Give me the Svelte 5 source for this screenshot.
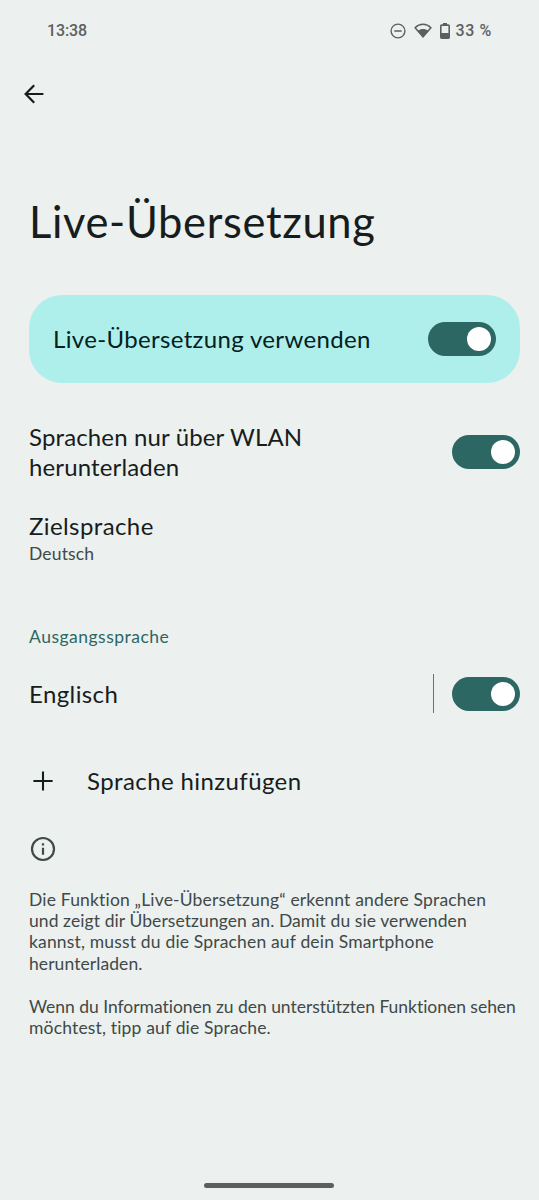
<script lang="ts">
	let enabled = $state(true);
	let wifiOnly = $state(true);
	let english = $state(true);
</script>

{#snippet toggle(on: boolean, label: string, flip: () => void)}
	<button
		type="button"
		class="switch"
		class:switch--on={on}
		role="switch"
		aria-checked={on}
		aria-label={label}
		onclick={flip}
	>
		<span class="switch__thumb"></span>
	</button>
{/snippet}

<div class="screen">
	<header class="status">
		<span class="status__time">13:38</span>
		<div class="status__icons">
			<svg class="status__dnd" width="16" height="16" viewBox="0 0 16 16">
				<circle cx="8" cy="8" r="6.9" fill="none" stroke="currentColor" stroke-width="1.4" />
				<path d="M4.3 8h7.4" stroke="currentColor" stroke-width="1.5" />
			</svg>
			<svg class="status__wifi" width="18" height="16" viewBox="0 0 18 16">
				<path
					d="M1.1 4.7C5.6.2 12.4.2 16.9 4.7L9 13.8z"
					fill="none"
					stroke="currentColor"
					stroke-width="1.5"
				/>
				<path d="M3.8 7.8c2.9-2.4 7.5-2.4 10.4 0L9 14.4z" fill="currentColor" />
			</svg>
			<svg class="status__battery" width="10" height="16" viewBox="0 0 10 16">
				<path d="M3 0h4v2H3z" fill="currentColor" />
				<rect x=".8" y="2.1" width="8.4" height="13" rx=".8" fill="none" stroke="currentColor" stroke-width="1.6" />
				<path d="M1 10h8v5H1z" fill="currentColor" />
			</svg>
			<span class="status__percent">33 %</span>
		</div>
	</header>

	<nav class="bar">
		<button type="button" class="bar__back" aria-label="Zurück">
			<svg width="20" height="20" viewBox="0 0 20 20" fill="none" stroke="currentColor" stroke-width="2.2">
				<path d="M10.2 1.2 1.6 10l8.6 8.8M1.8 10h17.6" />
			</svg>
		</button>
	</nav>

	<main>
		<h1>Live-Übersetzung</h1>

		<section class="card">
			<span class="title title--use">Live-Übersetzung verwenden</span>
			{@render toggle(enabled, 'Live-Übersetzung verwenden', () => (enabled = !enabled))}
		</section>

		<section class="row row--wifi">
			<span class="title title--wifi">Sprachen nur über WLAN<br />herunterladen</span>
			{@render toggle(wifiOnly, 'Nur über WLAN', () => (wifiOnly = !wifiOnly))}
		</section>

		<section class="target">
			<div class="title">Zielsprache</div>
			<div class="target__value">Deutsch</div>
		</section>

		<h2>Ausgangssprache</h2>

		<section class="row row--language">
			<span class="title">Englisch</span>
			<div class="row__end">
				<span class="divider"></span>
				{@render toggle(english, 'Englisch', () => (english = !english))}
			</div>
		</section>

		<button type="button" class="add">
			<svg width="28" height="28" viewBox="0 0 28 28" stroke="currentColor" stroke-width="2.1">
				<path d="M14 4.4v19.2M4.4 14h19.2" />
			</svg>
			<span class="title">Sprache hinzufügen</span>
		</button>

		<footer class="info">
			<svg width="28" height="28" viewBox="0 0 28 28">
				<circle cx="14" cy="14" r="11" fill="none" stroke="currentColor" stroke-width="2.2" />
				<path d="M12.9 12.8h2.2v7h-2.2zM12.9 8.2h2.2v2.3h-2.2z" fill="currentColor" />
			</svg>
			<p>
				Die Funktion „Live-Übersetzung“ erkennt andere Sprachen<br />
				<span class="info__even">und zeigt dir Übersetzungen an. Damit du sie verwenden</span><br />
				kannst, musst du die Sprachen auf dein Smartphone<br />
				<span class="info__even">herunterladen.</span>
			</p>
			<p>
				<span class="info__tight">Wenn du Informationen zu den unterstützten Funktionen sehen</span><br />
				möchtest, tipp auf die Sprache.
			</p>
		</footer>
	</main>

	<div class="gesture"></div>
</div>

<style>
	:global(body) {
		background: #ecf0ef;
	}
	.screen {
		display: flex;
		flex-direction: column;
		box-sizing: border-box;
		width: 539px;
		height: 1200px;
		overflow: hidden;
		background: #ecf0ef;
		color: #171d1c;
		font-family: Lato, Roboto, sans-serif;
		font-variant-ligatures: none;
	}
	button {
		border: 0;
		padding: 0;
		background: none;
		color: inherit;
		font: inherit;
	}
	svg {
		display: block;
		flex: none;
	}
	.status {
		display: flex;
		justify-content: space-between;
		align-items: center;
		height: 61px;
		padding: 0 47px 0 47px;
		color: #5b605f;
		font-family: Roboto, sans-serif;
		font-size: 16px;
		font-weight: 500;
	}
	.status__time { letter-spacing: -0.1px; }
	.status__icons {
		display: flex;
		align-items: center;
	}
	.status__wifi { margin-left: 8px; }
	.status__battery { margin-left: 8px; }
	.status__percent {
		margin-left: 5px;
		letter-spacing: 0.65px;
	}
	.bar {
		display: flex;
		align-items: center;
		height: 66px;
		padding-left: 24px;
	}
	main {
		display: flex;
		flex-direction: column;
		flex: 1;
		padding: 0 19px 0 29px;
	}
	h1 {
		margin: 64px 0 0;
		font-size: 43.5px;
		font-weight: 400;
		letter-spacing: 0.63px;
		line-height: 60px;
		white-space: nowrap;
	}
	.title {
		font-size: 24px;
		letter-spacing: 0.4px;
		line-height: 30px;
		white-space: nowrap;
	}
	.title--use { letter-spacing: 0.34px; }
	.title--wifi { letter-spacing: 0.14px; }
	.card {
		display: flex;
		align-items: center;
		justify-content: space-between;
		box-sizing: border-box;
		height: 88px;
		margin-top: 44px;
		padding: 0 24px;
		border-radius: 33px;
		background: #afefeb;
		color: #04201f;
	}
	.switch {
		display: flex;
		align-items: center;
		flex: none;
		box-sizing: border-box;
		width: 68px;
		height: 34px;
		padding: 0 5px;
		border-radius: 17px;
		background: #89918f;
	}
	.switch--on {
		justify-content: flex-end;
		background: #2c6764;
	}
	.switch__thumb {
		width: 24px;
		height: 24px;
		border-radius: 50%;
		background: #fff;
	}
	.row {
		display: flex;
		align-items: center;
		justify-content: space-between;
	}
	.row--wifi {
		margin-top: 39px;
		height: 60px;
	}
	.target { margin-top: 29px; }
	.target__value {
		margin-top: 1px;
		color: #404947;
		font-size: 17.5px;
		letter-spacing: 0.15px;
		line-height: 24px;
	}
	h2 {
		margin: 59px 0 0;
		color: #2c6764;
		font-size: 17.5px;
		font-weight: 400;
		letter-spacing: 0.5px;
		line-height: 24px;
	}
	.row--language {
		margin-top: 25px;
		height: 39px;
	}
	.row__end {
		display: flex;
		align-items: center;
		gap: 18px;
	}
	.divider {
		width: 1px;
		height: 39px;
		background: #6c7371;
	}
	.add {
		display: flex;
		align-items: center;
		gap: 30px;
		height: 30px;
		margin-top: 53px;
		text-align: left;
	}
	.info {
		margin-top: 39px;
		color: #404947;
	}
	.info p {
		margin: 25.5px 0 0;
		font-size: 17.5px;
		letter-spacing: 0.17px;
		line-height: 21.4px;
		white-space: nowrap;
	}
	.info p + p { margin-top: 21.4px; }
	.info__even { letter-spacing: 0.08px; }
	.info__tight { letter-spacing: -0.03px; }
	.gesture {
		width: 130px;
		height: 5px;
		margin: 0 0 12px 204px;
		border-radius: 3px;
		background: #5b605f;
	}
</style>
